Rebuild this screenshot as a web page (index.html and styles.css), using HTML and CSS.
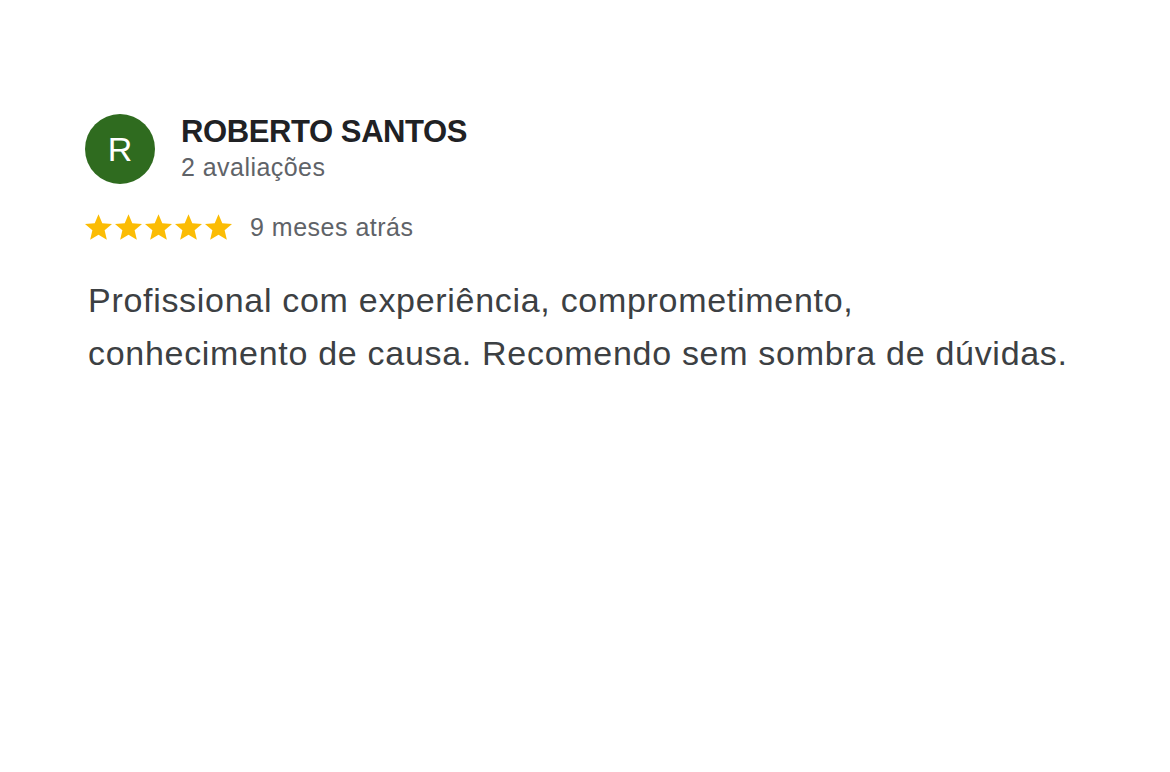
FILE: index.html
```html
<!DOCTYPE html>
<html lang="pt">
<head>
<meta charset="utf-8">
<title>Avaliação</title>
<link rel="stylesheet" href="styles.css">
</head>
<body>
<div class="review">
  <div class="header">
    <div class="avatar">R</div>
    <div class="who">
      <div class="name">ROBERTO SANTOS</div>
      <div class="count">2 avaliações</div>
    </div>
  </div>
  <div class="meta">
    <div class="stars">
      <svg class="star" viewBox="2 2 20 19"><path d="M12 17.27L18.18 21l-1.64-7.03L22 9.24l-7.19-.61L12 2 9.19 8.63 2 9.24l5.46 4.73L5.82 21z"/></svg>
      <svg class="star" viewBox="2 2 20 19"><path d="M12 17.27L18.18 21l-1.64-7.03L22 9.24l-7.19-.61L12 2 9.19 8.63 2 9.24l5.46 4.73L5.82 21z"/></svg>
      <svg class="star" viewBox="2 2 20 19"><path d="M12 17.27L18.18 21l-1.64-7.03L22 9.24l-7.19-.61L12 2 9.19 8.63 2 9.24l5.46 4.73L5.82 21z"/></svg>
      <svg class="star" viewBox="2 2 20 19"><path d="M12 17.27L18.18 21l-1.64-7.03L22 9.24l-7.19-.61L12 2 9.19 8.63 2 9.24l5.46 4.73L5.82 21z"/></svg>
      <svg class="star" viewBox="2 2 20 19"><path d="M12 17.27L18.18 21l-1.64-7.03L22 9.24l-7.19-.61L12 2 9.19 8.63 2 9.24l5.46 4.73L5.82 21z"/></svg>
    </div>
    <span class="when">9 meses atrás</span>
  </div>
  <p class="text">Profissional com experiência, comprometimento,<br>conhecimento de causa. Recomendo sem sombra de dúvidas.</p>
</div>
</body>
</html>
```

FILE: styles.css
```css
html, body {
  margin: 0;
  padding: 0;
  background: #ffffff;
}
body {
  font-family: "Liberation Sans", Arial, Helvetica, sans-serif;
  width: 1170px;
  height: 772px;
  overflow: hidden;
}
.review {
  padding: 114px 0 0 85px;
  display: flex;
  flex-direction: column;
}
.header {
  display: flex;
  align-items: flex-start;
  gap: 26px;
}
.avatar {
  width: 70px;
  height: 70px;
  border-radius: 50%;
  background: #2f6b1f;
  color: #ffffff;
  font-size: 34px;
  display: flex;
  align-items: center;
  justify-content: center;
  flex-shrink: 0;
}
.who {
  display: flex;
  flex-direction: column;
  padding-top: 0;
  gap: 2px;
}
.name {
  font-size: 31px;
  line-height: 36px;
  font-weight: bold;
  color: #202124;
  letter-spacing: -0.4px;
}
.count {
  font-size: 25px;
  line-height: 30px;
  color: #5f6368;
  letter-spacing: 0.45px;
}
.meta {
  display: flex;
  align-items: center;
  margin-top: 28px;
  gap: 18px;
}
.stars {
  display: flex;
  gap: 3px;
}
.star {
  width: 27px;
  height: 26px;
  fill: #fbbc04;
  display: block;
}
.when {
  font-size: 25px;
  line-height: 30px;
  color: #5f6368;
  letter-spacing: 0.5px;
}
.text {
  margin: 32px 0 0 3px;
  font-size: 34px;
  line-height: 53px;
  color: #3c4043;
  letter-spacing: 0.7px;
}
```
